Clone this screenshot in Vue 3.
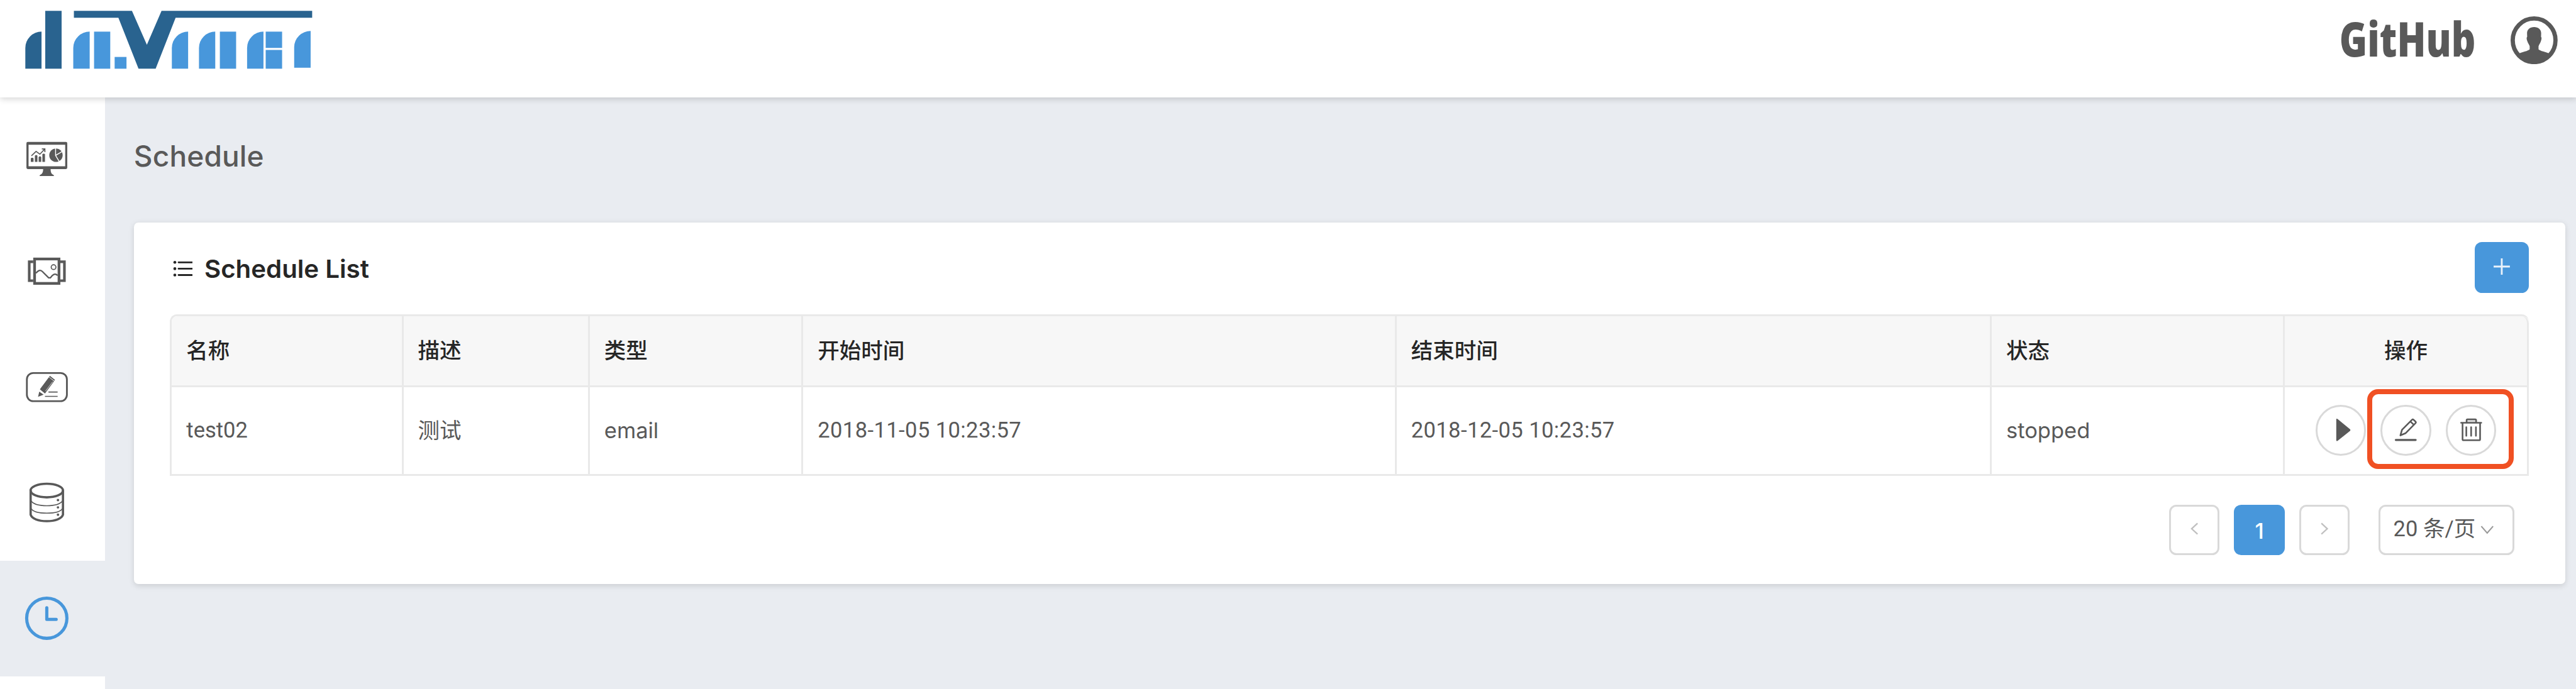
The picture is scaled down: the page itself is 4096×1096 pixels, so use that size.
<script setup>
const columns = [
  { key: 'name', title: '名称', width: 512 },
  { key: 'desc', title: '描述', width: 412 },
  { key: 'type', title: '类型', width: 472 },
  { key: 'start', title: '开始时间', width: 1312 },
  { key: 'end', title: '结束时间', width: 1316 },
  { key: 'status', title: '状态', width: 648 },
  { key: 'action', title: '操作', width: 540 }
]
const rows = [
  { name: 'test02', desc: '测试', type: 'email', start: '2018-11-05 10:23:57', end: '2018-12-05 10:23:57', status: 'stopped' }
]
</script>

<template>
  <div class="app">
    <header class="header">
      <svg class="logo" viewBox="0 0 700 160">
        <g fill="#29638f">
          <path d="M56 152V106A36 36 0 0 1 91.8 70V152Z" />
          <rect x="100" y="24" width="36.2" height="128" />
          <path d="M163.4 24H291.8L324.8 99L357.2 24H690.3V39.3H388.3L344.2 152H306.3L261.8 39.3H163.4Z" />
        </g>
        <g fill="#4897db">
          <path d="M162 152V106A36.2 36 0 0 1 198.3 70V152Z" />
          <rect x="208" y="70" width="35.8" height="82" />
          <rect x="253.5" y="126" width="26.2" height="26" />
          <path d="M380 152V106A36 36 0 0 1 416 70V152Z" />
          <path d="M440 152V106A36 36 0 0 1 476 70V152Z" />
          <rect x="486.2" y="70" width="35.9" height="82" />
          <path d="M546.4 152V106A36.2 36 0 0 1 582.6 70V152Z" />
          <rect x="587.5" y="70" width="36.3" height="36" />
          <rect x="587.5" y="110.5" width="36.3" height="41.5" />
          <path d="M650.5 150V104A36.3 36 0 0 1 686.9 68.5V150Z" />
        </g>
      </svg>
      <div class="header-right">
        <svg class="github" viewBox="0 0 296 100">
          <text x="-3" y="89" textLength="301" lengthAdjust="spacingAndGlyphs">GitHub</text>
        </svg>
        <svg class="avatar" viewBox="0 0 104 106">
          <ellipse cx="52" cy="53" rx="47.3" ry="48.2" fill="none" stroke="#595959" stroke-width="9.4" />
          <path fill="#595959" d="M52 23.7C61 23.7 68 29 67.6 38C67.4 41 67.4 43.5 67.4 46C69 46 68.6 51 67 55C65.5 60 63.5 61.5 61.8 66V73C66 77 77 78.5 84.7 82C78 94 66 101 52 101C38 101 26 94 19.3 82C27 78.5 38 77 42.2 73V66C40.500 61.500 38.500 60 37 55C35.400 51 35 46 36.600 46C36.600 43.500 36.600 41 36.400 38C36 29 43 23.700 52 23.700Z" />
        </svg>
      </div>
    </header>

    <div class="body">
      <nav class="sidebar">
        <a class="nav-item">
          <svg viewBox="0 0 104 104">
            <path fill="#595959" fill-rule="evenodd" d="M10 22H94.500Q97.300 22 97.300 25V79Q97.300 82 94.500 82H10Q7 82 7 79V25Q7 22 10 22ZM11.700 28V75.700H92.700V28Z" />
            <path fill="#595959" d="M44 81H60.500C60.500 89 61.500 92.500 67.700 95.500V97.500H36.300V95.500C42.500 92.500 44 89 44 81Z" />
            <path fill="#595959" d="M16.700 58.500l1.500-1.500h3l1.500 1.500V66h-6ZM25.700 52.500l1.500-1.500h2.600l1.500 1.500V66h-5.600ZM34 55.500l1.500-1.500h2.700l1.500 1.500V66H34ZM42.300 49l1.500-1h2.700l1.500 1V66h-5.700Z" />
            <path fill="none" stroke="#595959" stroke-width="2.300" d="M18 52.700L28.300 43L36.700 49L47.500 37.700M41 37.300H47.800V44.500" />
            <circle cx="72.300" cy="51.300" r="14.800" fill="#595959" />
            <path fill="none" stroke="#fff" stroke-width="2" d="M71.500 36V52L80 66M72.300 51.300L87 42.500" />
          </svg>
        </a>
        <a class="nav-item">
          <svg viewBox="0 0 104 104" fill="none" stroke="#595959">
            <rect x="25" y="25" width="54" height="54" stroke-width="6" />
            <path stroke-width="5.800" d="M22 31H13.200V73H22M82 31H91V73H82" />
            <circle cx="67" cy="43" r="5.200" stroke-width="2.400" />
            <path stroke-width="3.200" d="M28 56.300C33 50.500 37 48 42 52.500L56 66.500H60C64 61 69.500 55 76 61.500" />
          </svg>
        </a>
        <a class="nav-item">
          <svg viewBox="0 0 104 104">
            <rect x="8" y="21.400" width="88.500" height="62.300" rx="14" fill="none" stroke="#595959" stroke-width="4" />
            <path fill="#595959" d="M32.700 74L35.300 62.500L45 69.200ZM36.700 57.400L56.700 30.600L68 39.800L48 66.600ZM57.200 29.800L58.800 27.600L70.200 36.500L68.800 38.600Z" />
            <path fill="none" stroke="#fff" stroke-width="1" d="M49 61.500L65 40.500" />
            <path fill="none" stroke="#595959" stroke-width="2.400" d="M55.700 63.500H76M48 73H76" />
          </svg>
        </a>
        <a class="nav-item">
          <svg viewBox="0 0 104 104" fill="none" stroke="#595959">
            <ellipse cx="52" cy="25.500" rx="35.800" ry="15" stroke-width="5" />
            <path stroke-width="5" d="M16.300 25V79C19 88 34 93.200 52 93.200S85 88 87.800 79V25" />
            <path stroke-width="2.200" d="M17 48C22 56 36 59 52 59S82 56 87 48M17 65C22 73 36 75.500 52 75.500S82 73 87 65" />
            <g fill="#595959" stroke="none">
              <circle cx="76.700" cy="46.500" r="2.700" /><circle cx="76.700" cy="62.700" r="2.700" /><circle cx="76.700" cy="79" r="2.700" />
            </g>
          </svg>
        </a>
        <a class="nav-item active">
          <svg viewBox="0 0 104 104" fill="none" stroke="#4897db" stroke-width="7">
            <circle cx="52" cy="52" r="44.500" />
            <path stroke-linecap="round" stroke-linejoin="round" d="M52 28.800V54.600H72.800" />
          </svg>
        </a>
      </nav>

      <main class="content">
        <h1 class="title">Schedule</h1>
        <section class="panel">
          <div class="panel-head">
            <svg class="list-icon" viewBox="0 0 44 40" stroke="#262626" stroke-width="4">
              <path d="M12.500 6H42M12.500 20H42M12.500 34H42" stroke-linecap="round" />
              <g fill="#262626" stroke="none">
                <circle cx="4.200" cy="6" r="3.200" /><circle cx="4.200" cy="20" r="3.200" /><circle cx="4.200" cy="34" r="3.200" />
              </g>
            </svg>
            <h2>Schedule List</h2>
            <button class="add">
              <svg viewBox="0 0 36 36"><path d="M18 0V36M0 18H36" stroke="#fff" stroke-opacity=".88" stroke-width="4" /></svg>
            </button>
          </div>

          <table class="table">
            <colgroup>
              <col v-for="c in columns" :key="c.key" :style="{ width: c.width + 'px' }">
            </colgroup>
            <thead>
              <tr><th v-for="c in columns" :key="c.key" :class="c.key">{{ c.title }}</th></tr>
            </thead>
            <tbody>
              <tr v-for="r in rows" :key="r.name">
                <td v-for="c in columns" :key="c.key" :class="c.key">
                  <div v-if="c.key === 'action'" class="actions">
                    <button class="round">
                      <svg viewBox="0 0 112 112"><path fill="#595959" d="M45.600 32Q45.800 29.500 48.500 31.200L76 53.800Q78 55.700 76 57.600L48.500 79.600Q45.800 81 45.600 78.500Z" /></svg>
                    </button>
                    <button class="round">
                      <svg viewBox="0 0 112 112" fill="none" stroke="#595959" stroke-width="3.600" stroke-linejoin="round" stroke-linecap="round">
                        <path stroke-width="4.400" d="M34 77.600H78" />
                        <path d="M44.200 67.500L47.800 55L70 32.800Q71.600 31.300 73.200 32.800L77.800 37.200Q79.200 38.800 77.600 40.400L56 62.500ZM66.500 37L73.800 44" />
                      </svg>
                    </button>
                    <button class="round">
                      <svg viewBox="0 0 112 112" fill="none" stroke="#595959" stroke-width="3.600" stroke-linejoin="round" stroke-linecap="round">
                        <path fill="#dcdcdc" d="M46 39V34Q46 32 48 32H65Q67 32 67 34V39" />
                        <path d="M33.800 39.600H78.400M37 40V76Q37 78.200 39.200 78.200H73.600Q75.800 78.200 75.800 76V40M45.300 49.500V68.500M56 49.500V68.500M66.600 49.500V68.500" />
                      </svg>
                    </button>
                    <span class="mark"></span>
                  </div>
                  <template v-else>{{ r[c.key] }}</template>
                </td>
              </tr>
            </tbody>
          </table>

          <div class="pagination">
            <button class="page">
              <svg viewBox="0 0 20 28"><path d="M17 2L4 14L17 26" /></svg>
            </button>
            <button class="page current">1</button>
            <button class="page">
              <svg viewBox="0 0 20 28"><path d="M3 2L16 14L3 26" /></svg>
            </button>
            <div class="size">
              <span>20 条/页</span>
              <svg viewBox="0 0 30 22"><path d="M2 3L15 18L28 3" /></svg>
            </div>
          </div>
        </section>
      </main>
    </div>
  </div>
</template>

<style>
html, body { margin: 0; overflow: hidden; background: #e9ecf1; }
</style>

<style scoped>
.app {
  zoom: 0.7191;
  width: 5697px;
  height: 1525px;
  overflow: hidden;
  display: flex;
  flex-direction: column;
  background: #e9ecf1;
  font-family: Inter, "Noto Sans CJK SC", sans-serif;
  font-size: 48px;
  color: #595959;
}
.app svg { display: block; flex: none; }
button { padding: 0; margin: 0; font: inherit; color: inherit; box-sizing: border-box; }
.header {
  position: relative;
  z-index: 1;
  height: 216px;
  flex: none;
  display: flex;
  justify-content: space-between;
  background: #fff;
  box-shadow: 0 4px 14px rgba(0, 0, 0, .18);
}
.logo { width: 700px; height: 160px; }
.header-right { display: flex; gap: 80px; padding: 36px 41px 0 0; align-items: flex-start; }
.github { width: 296px; height: 100px; overflow: visible; }
.github text { font: 800 107px "Open Sans", sans-serif; fill: #595959; }
.avatar { width: 104px; height: 106px; }
.body { flex: 1; display: flex; min-height: 0; }
.sidebar { width: 232px; flex: none; background: #fff; }
.nav-item {
  height: 256px;
  box-sizing: border-box;
  padding-right: 24px;
  display: flex;
  align-items: center;
  justify-content: center;
}
.nav-item svg { width: 104px; height: 104px; }
.nav-item.active { background: #e9ecf1; }
.content { width: 5376px; padding: 80px 0 0 64px; }
.title { margin: 0; height: 196px; line-height: 98px; font-size: 64px; font-weight: 500; letter-spacing: .2px; }
.panel {
  height: 800px;
  box-sizing: border-box;
  padding: 44px 80px 0;
  background: #fff;
  border-radius: 10px;
  box-shadow: 0 4px 14px rgba(0, 0, 0, .13);
}
.panel-head { display: flex; height: 160px; align-items: flex-start; }
.list-icon { width: 44px; height: 40px; margin: 39px 26px 0 6px; }
h2 { margin: 19px auto 0 0; line-height: 80px; font-size: 56px; font-weight: 600; color: #262626; }
.add {
  width: 120px;
  height: 112px;
  border: 0;
  border-radius: 16px;
  background: #4897db;
  display: flex;
  align-items: center;
  justify-content: center;
  padding-bottom: 4px;
}
.add svg { width: 36px; height: 36px; }
.table {
  width: 5216px;
  table-layout: fixed;
  border-collapse: separate;
  border-spacing: 0;
  border: 0 solid #e9e9e9;
  border-width: 4.200px 0 0 4.200px;
  border-radius: 16px 16px 0 0;
}
th, td {
  box-sizing: border-box;
  padding: 0 0 0 32px;
  text-align: left;
  border: 0 solid #e9e9e9;
  border-width: 0 4.200px 4.200px 0;
  line-height: 72px;
  white-space: nowrap;
}
th { height: 156px; background: #f7f7f7; color: #262626; font-weight: 500; }
th:first-child { border-radius: 12px 0 0 0; }
th:last-child { border-radius: 0 16px 0 0; }
td { height: 196px; }
td.name, td.start, td.end { font-family: Roboto, sans-serif; }
td.start, td.end { letter-spacing: .6px; }
th.action, td.action { padding: 0; text-align: center; }
.actions { position: relative; display: flex; justify-content: center; gap: 32px; }
.round {
  width: 112px;
  height: 112px;
  border: 4.200px solid #d9d9d9;
  border-radius: 50%;
  background: #fff;
  display: flex;
  align-items: center;
  justify-content: center;
}
.round svg { width: 112px; height: 112px; }
.mark {
  position: absolute;
  left: 182px;
  top: -35px;
  width: 324px;
  height: 177px;
  box-sizing: border-box;
  border: 12.500px solid #f05023;
  border-radius: 24px;
}
.pagination { display: flex; justify-content: flex-end; gap: 32px; padding: 64px 32px 0 0; }
.page, .size {
  height: 112px;
  box-sizing: border-box;
  border: 4.200px solid #d9d9d9;
  border-radius: 16px;
  background: #fff;
  display: flex;
  align-items: center;
}
.page { width: 112px; justify-content: center; }
.page svg { width: 20px; height: 28px; fill: none; stroke: #c0c0c0; stroke-width: 3.200; margin-bottom: 4px; }
.page.current { background: #4897db; border-color: #4897db; color: #fff; font-weight: 500; padding-top: 4px; }
.size { width: 300px; margin-left: 32px; padding-left: 28px; line-height: 72px; font-family: Roboto, "Noto Sans CJK SC", sans-serif; }
.size span { width: 180px; white-space: nowrap; margin-top: -2px; }
.size svg { width: 30px; height: 22px; margin-left: 13px; fill: none; stroke: #999; stroke-width: 3; }
</style>
